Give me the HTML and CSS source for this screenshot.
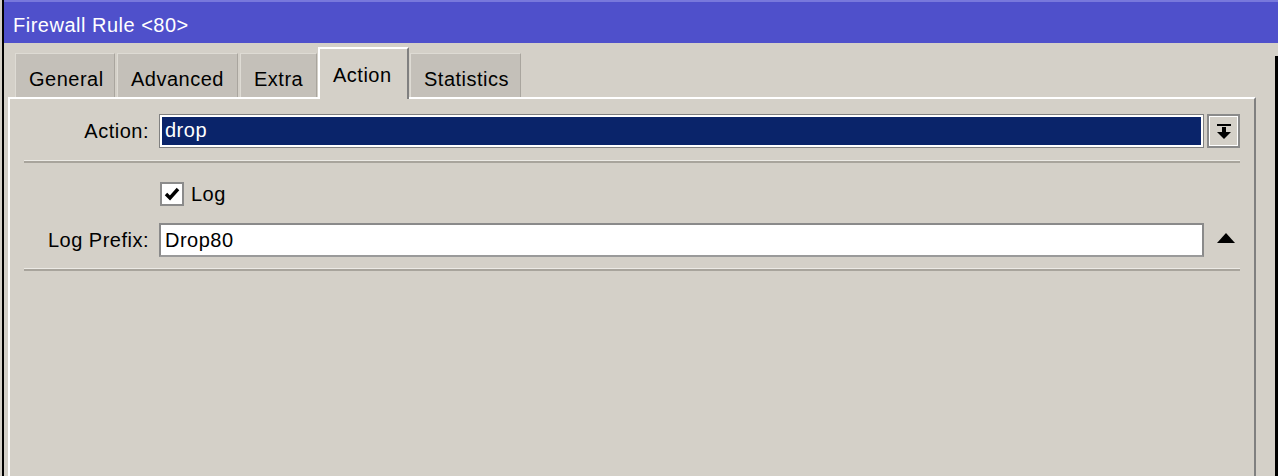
FILE: index.html
```html
<!DOCTYPE html>
<html lang="en">

<head>
    <meta charset="UTF-8">
    <meta name="viewport" content="width=device-width, initial-scale=1.0">
    <title>Firewall Rule &lt;80&gt;</title>
    <link rel="stylesheet" href="styles.css">
</head>

<body>
    <div class="window">
        <div class="titlebar">Firewall Rule &lt;80&gt;</div>
        <div class="content">
            <div class="main">
                <div class="tabs">
                    <div class="tab">General</div>
                    <div class="tab">Advanced</div>
                    <div class="tab">Extra</div>
                    <div class="tab active">Action</div>
                    <div class="tab">Statistics</div>
                </div>
                <div class="panel">
                    <div class="row first">
                        <div class="lbl">Action:</div>
                        <div class="field select">drop</div>
                        <div class="dropbtn">
                            <svg width="14" height="16" viewBox="0 0 14 16">
                                <rect x="0" y="0" width="14" height="2" fill="#000" />
                                <rect x="5" y="3" width="4" height="5" fill="#000" />
                                <polygon points="0,8 14,8 7,15" fill="#000" />
                            </svg>
                        </div>
                    </div>
                    <div class="sep"></div>
                    <div class="row check_row">
                        <div class="lbl"></div>
                        <div class="check_wrap">
                            <div class="checkbox">
                                <svg width="16" height="16" viewBox="0 0 16 16">
                                    <polyline points="2,8 6,12 14,3" fill="none" stroke="#000" stroke-width="3.4" />
                                </svg>
                            </div>
                            <span>Log</span>
                        </div>
                        <div></div>
                    </div>
                    <div class="row prefix_row">
                        <div class="lbl">Log Prefix:</div>
                        <div class="field">Drop80</div>
                        <div class="upbtn">
                            <svg width="18" height="11" viewBox="0 0 18 11">
                                <polygon points="9,0 18,10 0,10" fill="#000" />
                            </svg>
                        </div>
                    </div>
                    <div class="sep sep2"></div>
                </div>
            </div>
            <div class="side">
                <div class="side_edge"></div>
            </div>
        </div>
    </div>
</body>

</html>
```

FILE: styles.css
```css
* {
    margin: 0;
    padding: 0;
    box-sizing: border-box;
}

body {
    background-color: #d4d0c8;
    font-family: "Liberation Sans", Arial, sans-serif;
    font-size: 20px;
    letter-spacing: 0.5px;
    color: #000;
    overflow: hidden;
}

.window {
    margin-left: 2px;
    border-left: 2px solid #000;
    height: 100vh;
    display: flex;
    flex-direction: column;
}

.titlebar {
    height: 43px;
    background-color: #4f50cb;
    border-top: 2px solid #7878dc;
    color: #fff;
    padding: 5px 0 0 9px;
    line-height: 36px;
}

.content {
    flex: 1;
    display: flex;
}

.main {
    flex: 1;
    display: flex;
    flex-direction: column;
    padding-left: 4px;
}

.tabs {
    display: flex;
    align-items: flex-end;
    gap: 2px;
    padding-left: 7px;
    margin-top: 4px;
}

.tab {
    height: 44px;
    padding: 6px 13px 0;
    line-height: 38px;
    background-color: #c4c0b9;
    border-top: 1px solid #dedbd4;
    border-left: 1px solid #dedbd4;
    border-right: 1px solid #a9a59e;
}

.tab:nth-child(1) {
    width: 100px;
}

.tab:nth-child(2) {
    width: 121px;
}

.tab:nth-child(3) {
    width: 77px;
}

.tab:nth-child(5) {
    width: 111px;
}

.tab.active {
    position: relative;
    z-index: 2;
    width: 91px;
    height: 52px;
    margin: 0 -1px -2px -1px;
    padding-top: 8px;
    line-height: 36px;
    background-color: #d4d0c8;
    border-top: 2px solid #fff;
    border-left: 2px solid #fff;
    border-right: 2px solid #808080;
}

.panel {
    flex: 1;
    border-top: 2px solid #fff;
    border-left: 2px solid #fff;
    border-right: 2px solid #808080;
    padding: 15px 14px 0;
}

.row {
    display: grid;
    grid-template-columns: 125px 1fr 33px;
    column-gap: 10px;
    align-items: center;
    height: 34px;
}

.row .field {
    margin-right: -7px;
}

.lbl {
    text-align: right;
}

.field {
    height: 34px;
    border: 2px solid #8a8a8a;
    border-bottom-color: #9a9a9a;
    background-color: #fff;
    padding-left: 4px;
    line-height: 30px;
}

.select {
    border: 1px solid #808080;
    box-shadow: inset 0 0 0 2px #fff;
    background-color: #0a246a;
    color: #fff;
    padding-left: 5px;
    line-height: 31px;
}

.dropbtn {
    height: 34px;
    border: 2px solid #8a8a8a;
    box-shadow: inset 0 0 0 1px #fff;
    display: flex;
    align-items: center;
    justify-content: center;
    padding-top: 2px;
}

.upbtn {
    display: flex;
    justify-content: center;
    padding-left: 4px;
    padding-bottom: 4px;
}

.sep {
    height: 3px;
    border-top: 1px solid #eceae5;
    background-color: #a8a49c;
    margin-top: 12px;
}

.sep2 {
    margin-top: 11px;
}

.check_row {
    height: 24px;
    margin-top: 19px;
}

.check_wrap {
    display: flex;
    align-items: center;
    gap: 7px;
    padding-left: 1px;
}

.checkbox {
    width: 24px;
    height: 24px;
    border: 2px solid #8b8b8b;
    background-color: #fff;
    display: flex;
    align-items: center;
    justify-content: center;
}

.prefix_row {
    margin-top: 17px;
}

.side {
    width: 22px;
    display: flex;
    justify-content: flex-end;
    padding-top: 13px;
}

.side_edge {
    width: 3px;
    background-color: #000;
}
```
